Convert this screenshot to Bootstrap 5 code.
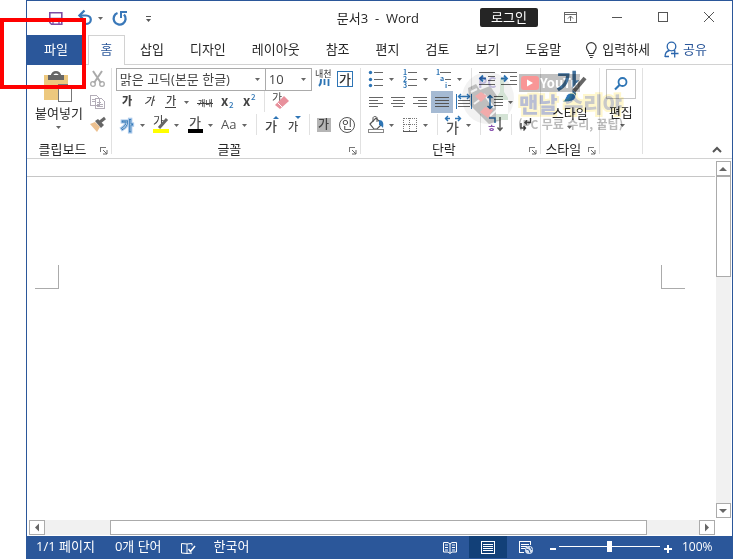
<!DOCTYPE html>
<html lang="ko">
<head>
<meta charset="utf-8">
<meta name="viewport" content="width=device-width, initial-scale=1">
<title>문서3 - Word</title>
<link href="https://cdn.jsdelivr.net/npm/bootstrap@5.3.0/dist/css/bootstrap.min.css" rel="stylesheet">
<style>
:root{--word:#2b579a;--line:#d2d2d2;--edge:#ababab;--ink:#444;--acc:#2e75b5}
body{font:13px/18px "Open Sans","Noto Sans CJK KR",sans-serif;color:#262626;background:#fff;overflow:hidden}
button{border:0;background:none;padding:0;color:inherit;font:inherit}
svg{display:block;overflow:visible}
svg text{font-family:"Noto Sans CJK KR",sans-serif}
.px{shape-rendering:crispEdges}
.app-window{margin-left:26px;border:1px solid var(--word);border-bottom:0}
.title-bar{height:34px}
.doc-title{margin-right:61px}
.quick-access{padding-left:18px}
.login-btn{width:58px;height:19px;background:#252525;color:#fff;border-radius:2px;line-height:15px;margin:0 10px 2px 0}
.win-btn{width:46px}
.win-btn,.quick-access{padding-bottom:1px}
.ribbon-tabs{height:30px;border-bottom:1px solid var(--line);flex-wrap:nowrap}
.ribbon-tabs a{color:#262626;text-decoration:none;padding:5px 13px 0;height:30px;white-space:nowrap}
.ribbon-tabs .file-tab{background:var(--word);color:#fff;width:55px;padding:5px 0 0 3px;text-align:center;margin-right:6px}
.ribbon-tabs .home-tab{border:1px solid var(--line);border-bottom:0;background:#fff;color:var(--word);padding:4px 0 0;width:37px;text-align:center;margin-right:2px}
.ribbon-tabs .tell-me{padding:5px 0 0;margin-left:9px}
.ribbon-tabs .share-link{color:var(--word);padding:5px 0 0;margin-left:13px}
.ribbon{height:94px;border-bottom:1px solid var(--line);padding:3px 0 0}
.rib-group{border-right:1px solid #e1e1e1;height:86px}
.rib-body{height:70px;padding:0 2px 0 4px;flex:none}
.tool-row{height:23px}
.rib-label{height:16px;padding-top:2px}
.tool{width:22px;height:22px;flex:none}
.drop{width:12px;height:22px;flex:none}
.split{width:1px;height:21px;margin:0 4px;background:#e1e1e1;flex:none}
.tool.active{background:#a5bad3}
.launcher{width:13px}
.rib-select{font-size:13px;height:23px;line-height:19px;padding:0 14px 0 3px;border:1px solid var(--edge);border-radius:0;color:#444;background-color:#fff;background-size:7px 4px;background-position:right 4px center;background-repeat:no-repeat;background-image:url("data:image/svg+xml,%3Csvg xmlns='http://www.w3.org/2000/svg' viewBox='0 0 7 4'%3E%3Cpath d='M1 0h5L3.500 3z' fill='%23666'/%3E%3C/svg%3E")}
.font-name{width:150px}
.font-size{width:47px;margin-left:-1px}
.big-tool{line-height:18px}
.big-tool svg{margin:0 auto}
.edit-group{padding:0 2px}
.find-box{border:1px solid #c6c6c6;width:30px;height:30px;margin:1px auto 4px}
.workspace{display:grid;grid-template-columns:1fr 17px;grid-template-rows:1fr 18px}
.ruler{height:18px;border-bottom:1px solid #c6c6c6}
.sheet{padding:88px 30px 0 8px}
.crop-mark{width:24px;height:24px;border:0 solid var(--edge);border-bottom-width:1px}
.mark-l{border-right-width:1px}
.mark-r{border-left-width:1px}
.vbar{padding:2px 0 0 1px}
.hbar{padding:2px 0 1px 2px}
.sb-btn{width:16px;height:15px;border:1px solid var(--edge);background:#fff;flex:none}
.sb-track{background:#f1f1f1}
.vbar .sb-btn,.vbar .sb-track{width:15px}
.vbar .sb-btn svg{margin-left:-1px}
.thumb-v{height:31%;border:1px solid var(--edge);background:#fff}
.thumb-h{height:15px;width:82%;margin-left:10%;border:1px solid var(--edge);background:#fff}
.status-bar{height:23px;background:var(--word);color:#fff;line-height:21px;padding-left:9px}
.view-btn{width:38px;height:22px}
.view-btn svg{margin:0 auto}
.view-btn.active{background:#124078}
.zoom-range{appearance:none;-webkit-appearance:none;width:101px;height:13px;margin:4px 3px 0;background:linear-gradient(#fff,#fff) center/100% 1px no-repeat}
.zoom-range::-webkit-slider-thumb{-webkit-appearance:none;width:5px;height:11px;background:#fff;border-radius:0}
.zoom-pct{width:60px;padding-left:10px;font-size:12px}
.red-frame{position:absolute;left:0;top:18px;width:86px;height:71px;border:4px solid #f00;pointer-events:none}
.channel-mark{position:absolute;left:460px;top:66px;pointer-events:none;mix-blend-mode:multiply}
</style>
<script src="https://cdn.jsdelivr.net/npm/bootstrap@5.3.0/dist/js/bootstrap.bundle.min.js"></script>
</head>
<body>
<svg width="0" height="0" class="position-absolute" aria-hidden="true">
<symbol id="caret" viewBox="0 0 12 22"><path d="M2 10h5L4.500 13z" fill="#666"/></symbol>
<symbol id="launch" viewBox="0 0 13 18"><path class="px" d="M2.500 12V7.500H8" fill="none" stroke="#777"/><path d="M5 10l4 4M9 10v4H5" fill="none" stroke="#666"/></symbol>
</svg>
<div class="app-window min-vh-100 d-flex flex-column">
 <header class="title-bar d-flex align-items-center">
  <div class="quick-access d-flex me-auto">
   <button aria-label="저장"><svg width="28" height="22"><path d="M4.800 5.800h12v11.400H6.500L4.800 15.500z" fill="none" stroke="#7c4fa3" stroke-width="1.600"/><path d="M5 11.500h12M8 17v-3h6v3" fill="none" stroke="#7c4fa3" stroke-width="1.300"/></svg></button>
   <button aria-label="실행 취소"><svg width="23" height="22"><path d="M6 8.500h7c6.500 0 6.500 8.500-.500 8.500" fill="none" stroke="#3a78b9" stroke-width="2.200"/><path d="M11.500 3.500L6.500 8.500l5 5" fill="none" stroke="#3a78b9" stroke-width="2.400"/></svg></button>
   <button class="drop" aria-label="실행 취소 목록"><svg width="12" height="22"><use href="#caret"/></svg></button>
   <button aria-label="다시 실행"><svg width="29" height="22"><path d="M9.500 6A6 6 0 1 0 16 7.500" fill="none" stroke="#3a78b9" stroke-width="2.300"/><path d="M13 11V5H19" fill="none" stroke="#3a78b9" stroke-width="2"/></svg></button>
   <button aria-label="빠른 실행 도구 모음"><svg width="22" height="22"><path d="M9 9.500h5" stroke="#555" class="px"/><path d="M9 12h5l-2.500 3z" fill="#555"/></svg></button>
  </div>
  <div class="doc-title">문서3 &nbsp;-&nbsp; Word</div>
  <button class="login-btn">로그인</button>
  <button class="win-btn" aria-label="리본 표시 옵션"><svg width="46" height="22"><g fill="none" stroke="#666" class="px"><path d="M16.500 5.500h12v10h-12zM16 7.500h13M22.500 9v5"/></g><path d="M20 11.500L22.500 9l2.500 2.500" fill="none" stroke="#666"/></svg></button>
  <button class="win-btn" aria-label="최소화"><svg width="46" height="22"><path class="px" d="M18 10.500h10" stroke="#555"/></svg></button>
  <button class="win-btn" aria-label="최대화"><svg width="46" height="22"><path class="px" d="M18.500 5.500h9v9h-9z" fill="none" stroke="#555"/></svg></button>
  <button class="win-btn" aria-label="닫기"><svg width="46" height="22"><path d="M18 5l10 10M28 5L18 15" stroke="#555"/></svg></button>
 </header>
 <nav class="ribbon-tabs d-flex">
  <a href="#" class="file-tab">파일</a><a href="#" class="home-tab">홈</a><a href="#">삽입</a><a href="#">디자인</a><a href="#">레이아웃</a><a href="#">참조</a><a href="#">편지</a><a href="#">검토</a><a href="#">보기</a><a href="#">도움말</a>
  <a href="#" class="tell-me d-flex"><svg class="flex-shrink-0" width="19" height="20"><path d="M6 13.500c0-2.500-2.500-3-2.500-6a4.800 4.800 0 0 1 9.600 0c0 3-2.500 3.500-2.500 6zM6 15.500h4.600M7 17.500h2.600" fill="none" stroke="#333" stroke-width="1.200"/></svg>입력하세</a>
  <a href="#" class="share-link d-flex"><svg width="20" height="20"><circle cx="8.500" cy="6.500" r="4.300" fill="none" stroke="#2b66ad" stroke-width="1.300"/><path d="M2 17c0-4 2-6 4.500-6.500M10.500 10.500l2 1M2 16.500h4M8 13.500h7.500M11.700 10v7.500" fill="none" stroke="#2b66ad" stroke-width="1.300"/></svg>공유</a>
 </nav>
 <section class="ribbon d-flex">
  <div class="rib-group d-flex flex-column">
   <div class="rib-body d-flex align-items-start">
    <button class="big-tool px-1"><svg width="46" height="36"><path d="M8 7h24v25H8z" fill="#edc87e"/><path d="M12 7h16v5H12z" fill="#666"/><path d="M16 8c0-5 8-5 8 0" fill="none" stroke="#666" stroke-width="2.500"/><path class="px" d="M22.500 16.500h9l4 4v13h-13z" fill="#fff" stroke="#777"/><path class="px" d="M31.500 16.500v4h4" fill="none" stroke="#777"/></svg>붙여넣기<svg class="mx-auto" width="12" height="10"><path d="M3 4h5L5.500 7z" fill="#666"/></svg></button>
    <div>
     <div class="tool-row"><button class="tool" aria-label="잘라내기"><svg width="22" height="22"><path d="M6 3l8 12M15 3L7 15" stroke="#aaa" stroke-width="2"/><circle cx="6" cy="16" r="2.300" fill="none" stroke="#aaa" stroke-width="1.300"/><circle cx="15" cy="16" r="2.300" fill="none" stroke="#aaa" stroke-width="1.300"/></svg></button></div>
     <div class="tool-row"><button class="tool" aria-label="복사"><svg width="22" height="22"><g class="px" fill="#fff" stroke="#b3adb8"><path d="M3.500 4.500h6l3 3v7h-9zM8.500 7.500h6l3 3v7h-9z"/><path d="M5 8.500h3M5 10.500h3M10 11.500h4M10 13.500h6M10 15.500h6"/></g></svg></button></div>
     <div class="tool-row"><button class="tool" aria-label="서식 복사"><svg width="22" height="22"><path d="M3 10l5-2 5 5-3 5z" fill="#edc190"/><path d="M8 7l3-2 6 6-3 3z" fill="#666"/><path d="M13 8l5-4" stroke="#666" stroke-width="3"/></svg></button></div>
    </div>
   </div>
   <div class="rib-label d-flex"><span class="flex-fill text-center">클립보드</span><button class="launcher" aria-label="클립보드 옵션"><svg width="13" height="18"><use href="#launch"/></svg></button></div>
  </div>
  <div class="rib-group d-flex flex-column">
   <div class="rib-body">
    <div class="tool-row d-flex">
     <select class="form-select rib-select font-name" aria-label="글꼴"><option>맑은 고딕(본문 한글)</option></select>
     <select class="form-select rib-select font-size" aria-label="글꼴 크기"><option>10</option></select>
     <button class="tool" aria-label="윗주 달기"><svg width="22" height="22"><text x="3" y="9" font-size="9" fill="#333">내천</text><path d="M9 11c0 4 0 5-2 7M12.500 11v6M16.500 11v7" fill="none" stroke="#2e75b5" stroke-width="1.800"/></svg></button>
     <button class="tool" aria-label="문자 테두리"><svg width="22" height="22"><path class="px" d="M3.500 3.500h15v15h-15z" fill="none" stroke="#2e75b5"/><text x="5" y="16" font-size="13" font-weight="500" fill="#333">가</text></svg></button>
    </div>
    <div class="tool-row d-flex">
     <button class="tool" aria-label="굵게"><svg width="22" height="22"><text x="6" y="14" font-size="11" font-weight="900" fill="#444">가</text></svg></button>
     <button class="tool" aria-label="기울임꼴"><svg width="22" height="22"><text x="6" y="14" font-size="11" font-style="italic" font-weight="500" fill="#444">가</text></svg></button>
     <button class="tool" aria-label="밑줄"><svg width="22" height="22"><text x="6" y="14" font-size="11" font-weight="500" fill="#444">가</text><path class="px" d="M5 16.500h11" stroke="#444"/></svg></button>
     <button class="drop" aria-label="밑줄 종류"><svg width="12" height="22"><use href="#caret"/></svg></button>
     <button class="tool" aria-label="취소선"><svg width="22" height="22"><text x="4" y="15" font-size="8" font-weight="500" fill="#444">개내</text><path class="px" d="M3 12.500h16" stroke="#444"/></svg></button>
     <button class="tool" aria-label="아래 첨자"><svg width="22" height="22"><text x="5" y="15" font-size="13" font-weight="700" fill="#444">x</text><text x="13" y="17" font-size="8" font-weight="500" fill="#2e75b5">2</text></svg></button>
     <button class="tool" aria-label="위 첨자"><svg width="22" height="22"><text x="5" y="15" font-size="13" font-weight="700" fill="#444">x</text><text x="13" y="9" font-size="8" font-weight="500" fill="#2e75b5">2</text></svg></button>
     <span class="split"></span>
     <button class="tool" aria-label="서식 지우기"><svg width="22" height="22"><text x="3" y="11" font-size="11" fill="#444">가</text><path d="M6 14L15 5l5 5-9 8z" fill="#e8909c"/><path d="M8.500 11.500l5 5" stroke="#fff"/></svg></button>
    </div>
    <div class="tool-row d-flex">
     <button class="tool" aria-label="텍스트 효과"><svg width="22" height="22"><text x="5" y="16" font-size="13" font-weight="500" fill="#fff" stroke="#a9c8ea" stroke-width="3">가</text><text x="5" y="16" font-size="13" font-weight="500" fill="#fff" stroke="#2e75b5" stroke-width=".8">가</text></svg></button>
     <button class="drop" aria-label="텍스트 효과 목록"><svg width="12" height="22"><use href="#caret"/></svg></button>
     <button class="tool" aria-label="형광펜"><svg width="22" height="22"><path class="px" d="M3 15h16v4H3z" fill="#ff0"/><text x="3" y="12" font-size="12" fill="#444">가</text><path d="M9 14l8-9" stroke="#666" stroke-width="3"/></svg></button>
     <button class="drop" aria-label="형광펜 색"><svg width="12" height="22"><use href="#caret"/></svg></button>
     <button class="tool" aria-label="글꼴 색"><svg width="22" height="22"><path class="px" d="M4 15h15v4H4z" fill="#000"/><text x="5" y="13" font-size="13" font-weight="500" fill="#555">가</text></svg></button>
     <button class="drop" aria-label="글꼴 색 목록"><svg width="12" height="22"><use href="#caret"/></svg></button>
     <button class="tool" aria-label="대/소문자 바꾸기"><svg width="22" height="22"><text x="3" y="15" font-size="13" fill="#555" style="font-family:'Open Sans'">Aa</text></svg></button>
     <button class="drop" aria-label="대/소문자 목록"><svg width="12" height="22"><use href="#caret"/></svg></button>
     <span class="split"></span>
     <button class="tool" aria-label="글꼴 크게"><svg width="22" height="22"><text x="4" y="17" font-size="13" fill="#444" font-weight="500">가</text><path d="M12 5h6l-3-3z" fill="#2e75b5"/></svg></button>
     <button class="tool" aria-label="글꼴 작게"><svg width="22" height="22"><text x="5" y="17" font-size="11" fill="#444" font-weight="500">가</text><path d="M12 2h6l-3 3z" fill="#2e75b5"/></svg></button>
     <span class="split"></span>
     <button class="tool" aria-label="문자 음영"><svg width="22" height="22"><path class="px" d="M3 4h14v14H3z" fill="#b5b5b5"/><text x="4" y="15" font-size="12" font-weight="500" fill="#444">가</text></svg></button>
     <button class="tool" aria-label="원 문자"><svg width="22" height="22"><circle cx="11" cy="11" r="7.500" fill="none" stroke="#555"/><text x="6" y="15" font-size="11" fill="#333">인</text></svg></button>
    </div>
   </div>
   <div class="rib-label d-flex"><span class="flex-fill text-center">글꼴</span><button class="launcher" aria-label="글꼴 옵션"><svg width="13" height="18"><use href="#launch"/></svg></button></div>
  </div>
  <div class="rib-group d-flex flex-column">
   <div class="rib-body">
    <div class="tool-row d-flex">
     <button class="tool" aria-label="글머리 기호"><svg width="22" height="22"><path class="px" d="M9 4.500h9M9 11.500h9M9 17.500h9" stroke="#666"/><g fill="#2e75b5"><circle cx="5.500" cy="4.500" r="1.700"/><circle cx="5.500" cy="11.500" r="1.700"/><circle cx="5.500" cy="17.500" r="1.700"/></g></svg></button>
     <button class="drop" aria-label="글머리 기호 목록"><svg width="12" height="22"><use href="#caret"/></svg></button>
     <button class="tool" aria-label="번호 매기기"><svg width="22" height="22"><path class="px" d="M9 4.500h9M9 11.500h9M9 17.500h9" stroke="#666"/><g fill="#2e75b5" font-size="7" font-weight="700"><text x="4" y="7">1</text><text x="4" y="14">2</text><text x="4" y="20">3</text></g></svg></button>
     <button class="drop" aria-label="번호 목록"><svg width="12" height="22"><use href="#caret"/></svg></button>
     <button class="tool" aria-label="다단계 목록"><svg width="22" height="22"><path class="px" d="M7 4.500h11M12 11.500h6M15 17.500h3" stroke="#666"/><g fill="#2e75b5" font-size="7" font-weight="700"><text x="3" y="7">1</text><text x="7" y="13">a</text><text x="12" y="20">i</text></g></svg></button>
     <button class="drop" aria-label="다단계 종류"><svg width="12" height="22"><use href="#caret"/></svg></button>
     <span class="split"></span>
     <button class="tool" aria-label="내어쓰기"><svg width="22" height="22"><path class="px" d="M3 4.500h16M12 8.500h7M12 12.500h7M3 16.500h16" stroke="#666"/><path d="M10 10.500H4M7 7.500l-3 3 3 3" fill="none" stroke="#2e75b5" stroke-width="1.800"/></svg></button>
     <button class="tool" aria-label="들여쓰기"><svg width="22" height="22"><path class="px" d="M3 4.500h16M12 8.500h7M12 12.500h7M3 16.500h16" stroke="#666"/><path d="M3 10.500h6M6 7.500l3 3-3 3" fill="none" stroke="#2e75b5" stroke-width="1.800"/></svg></button>
    </div>
    <div class="tool-row d-flex">
     <button class="tool" aria-label="왼쪽 맞춤"><svg width="22" height="22"><path class="px" d="M4 6.500h14M4 9.500h9M4 12.500h14M4 15.500h9" stroke="#666"/></svg></button>
     <button class="tool" aria-label="가운데 맞춤"><svg width="22" height="22"><path class="px" d="M4 6.500h14M6 9.500h10M4 12.500h14M6 15.500h10" stroke="#666"/></svg></button>
     <button class="tool" aria-label="오른쪽 맞춤"><svg width="22" height="22"><path class="px" d="M4 6.500h14M9 9.500h9M4 12.500h14M9 15.500h9" stroke="#666"/></svg></button>
     <button class="tool active" aria-label="양쪽 맞춤"><svg width="22" height="22"><path class="px" d="M4 6.500h14M4 9.500h14M4 12.500h14M4 15.500h14" stroke="#555"/></svg></button>
     <button class="tool" aria-label="균등 분할"><svg width="22" height="22"><path class="px" d="M5 9.500h12M5 12.500h12M5 15.500h12" stroke="#666"/><path class="px" d="M3.500 3v15M18.500 3v15" stroke="#2e75b5"/><path d="M5 5.500h12M8 3L5.500 5.500 8 8M14 3l2.500 2.500L14 8" fill="none" stroke="#2e75b5" stroke-width="1.400"/></svg></button>
     <span class="split invisible"></span>
     <button class="tool" aria-label="줄 간격"><svg width="22" height="22"><path class="px" d="M10 5.500h9M10 8.500h9M10 11.500h9M10 14.500h9" stroke="#666"/><path d="M6 4v14M3.500 7L6 4.500 8.500 7M3.500 15L6 17.500 8.500 15" fill="none" stroke="#2e75b5" stroke-width="1.500"/></svg></button>
     <button class="drop" aria-label="줄 간격 목록"><svg width="12" height="22"><use href="#caret"/></svg></button>
    </div>
    <div class="tool-row d-flex">
     <button class="tool" aria-label="음영"><svg width="22" height="22"><path d="M5 10l6-6 6 6-5 5H9z" fill="#fff" stroke="#555" stroke-width="1.200"/><path d="M8 8V4c0-2 4-2 4 0v4" fill="none" stroke="#555"/><path d="M14 6c4 0 5 3 4 8-1-1-2-3-4-3z" fill="#2e75b5"/><path class="px" d="M3.500 15.500h15v3h-15z" fill="#fff" stroke="#888"/></svg></button>
     <button class="drop" aria-label="음영 색"><svg width="12" height="22"><use href="#caret"/></svg></button>
     <button class="tool" aria-label="테두리"><svg width="22" height="22"><path class="px" d="M5 4.500h13M5 10.500h13M4.500 4v13M10.500 4v13M17.500 4v13" fill="none" stroke="#777" stroke-dasharray="1 1"/><path class="px" d="M4 17.500h14" stroke="#555"/></svg></button>
     <button class="drop" aria-label="테두리 종류"><svg width="12" height="22"><use href="#caret"/></svg></button>
     <span class="split"></span>
     <button class="tool" aria-label="문자 모양"><svg width="22" height="22"><text x="4" y="19" font-size="14" font-weight="500" fill="#555">가</text><path d="M3 4.500h5M6 2L3.500 4.500 6 7M13 4.500h5M16 2l2.500 2.500L16 7" fill="none" stroke="#2e75b5" stroke-width="1.400"/></svg></button>
     <button class="drop" aria-label="문자 모양 목록"><svg width="12" height="22"><use href="#caret"/></svg></button>
     <span class="split"></span>
     <button class="tool" aria-label="정렬"><svg width="22" height="22"><path d="M4 4h6v5" fill="none" stroke="#2e75b5" stroke-width="1.500"/><text x="2" y="18" font-size="10" font-weight="700" fill="#8b55b0">ㅎ</text><path d="M15 3v13M12.500 13.500L15 16.500l2.500-3" fill="none" stroke="#555" stroke-width="1.400"/></svg></button>
     <span class="split"></span>
     <button class="tool" aria-label="편집 기호"><svg width="22" height="22"><path d="M14.500 4v4.500H9M11 6.500L9 8.500l2 2M5 9v5h4.500M7.500 12l2 2-2 2.500" fill="none" stroke="#444" stroke-width="1.400"/></svg></button>
    </div>
   </div>
   <div class="rib-label d-flex"><span class="flex-fill text-center">단락</span><button class="launcher" aria-label="단락 옵션"><svg width="13" height="18"><use href="#launch"/></svg></button></div>
  </div>
  <div class="rib-group d-flex flex-column">
   <div class="rib-body px-1">
    <button class="big-tool px-1"><svg width="42" height="36"><text x="7" y="25" font-size="26" font-weight="700" fill="#41719c">가</text><path d="M35 11L25 23" stroke="#fff" stroke-width="6"/><path d="M36 10L25 23" stroke="#666" stroke-width="4"/><path d="M13 34c4-1 3-9 9-9 4 0 6 4 3 7-3 2-8 2-12 2z" fill="#2e75b5" stroke="#fff"/></svg>스타일<svg class="mx-auto" width="12" height="10"><path d="M3 4h5L5.500 7z" fill="#666"/></svg></button>
   </div>
   <div class="rib-label d-flex"><span class="flex-fill text-center">스타일</span><button class="launcher" aria-label="스타일 옵션"><svg width="13" height="18"><use href="#launch"/></svg></button></div>
  </div>
  <div class="rib-group edit-group">
   <button class="big-tool px-1"><span class="find-box d-flex align-items-center"><svg width="16" height="16"><circle cx="9.500" cy="6" r="4" fill="none" stroke="#2e75b5" stroke-width="1.800"/><path d="M6.500 9L2 13.500" stroke="#2e75b5" stroke-width="2.200"/></svg></span><span class="d-block">편집</span><svg width="12" height="10"><path d="M5 3h5L7.500 6z" fill="#666"/></svg></button>
  </div>
  <button class="ms-auto align-self-end me-2 pb-1" aria-label="리본 축소"><svg width="14" height="10"><path d="M3 8l4-4 4 4" fill="none" stroke="#555" stroke-width="2"/></svg></button>
 </section>
 <main class="workspace flex-fill">
  <div>
   <div class="ruler"></div>
   <div class="sheet d-flex justify-content-between"><span class="crop-mark mark-l"></span><span class="crop-mark mark-r"></span></div>
  </div>
  <div class="vbar d-flex flex-column">
   <button class="sb-btn" aria-label="위로"><svg width="14" height="13"><path d="M3 9h8L7 5z" fill="#666"/></svg></button>
   <div class="sb-track flex-fill d-flex flex-column"><div class="thumb-v"></div></div>
   <button class="sb-btn" aria-label="아래로"><svg width="14" height="13"><path d="M3 5h8L7 9z" fill="#666"/></svg></button>
  </div>
  <div class="hbar d-flex">
   <button class="sb-btn" aria-label="왼쪽으로"><svg width="14" height="13"><path d="M9 2.500v8L5 6.500z" fill="#666"/></svg></button>
   <div class="sb-track flex-fill"><div class="thumb-h"></div></div>
   <button class="sb-btn" aria-label="오른쪽으로"><svg width="14" height="13"><path d="M5 2.500v8L9 6.500z" fill="#666"/></svg></button>
  </div>
 </main>
 <footer class="status-bar d-flex">
  <span>1/1 페이지</span><span class="ms-3 ps-1">0개 단어</span>
  <button class="ms-3" aria-label="맞춤법 검사"><svg width="20" height="20"><path d="M9 15.500L3.500 15V5.500L9 6zM9 15.500l5-.5M9 6l5-.500v2" fill="none" stroke="#fff"/><path d="M10.500 11l2 2.500L17 8" fill="none" stroke="#fff" stroke-width="1.500"/></svg></button>
  <span class="ms-3">한국어</span>
  <div class="d-flex ms-auto">
   <button class="view-btn" aria-label="읽기 모드"><svg width="16" height="20"><path d="M8 16.500L6 15H1.500V5.500H6L8 7l2-1.500h4.500V15H10zM8 7v9M3 8h3M3 10.500h3M3 13h3M10 8h3M10 10.500h3M10 13h3" fill="none" stroke="#fff"/></svg></button>
   <button class="view-btn active" aria-label="인쇄 모양"><svg width="16" height="20"><path class="px" d="M1.500 4.500h13v12h-13zM3 7.500h10M3 9.500h10M3 11.500h10M3 13.500h10" fill="none" stroke="#fff"/></svg></button>
   <button class="view-btn" aria-label="웹 모양"><svg width="16" height="20"><path class="px" d="M6 15.500H1.500v-11h11V8M3 7.500h8M3 9.500h6M3 11.500h4" fill="none" stroke="#fff"/><circle cx="11" cy="13" r="4" fill="#d5e0ef"/><path d="M8 12l3 1 1 3M12 10l2 3" fill="none" stroke="#2b579a"/></svg></button>
   <button aria-label="축소"><svg width="11" height="20"><path class="px" d="M5 10h6v2H5z" fill="#fff"/></svg></button>
   <input type="range" class="zoom-range" min="0" max="100" value="50" aria-label="확대/축소">
   <button aria-label="확대"><svg width="9" height="20"><path class="px" d="M1 10h8v2H1zM4 7h2v8H4z" fill="#fff"/></svg></button>
   <span class="zoom-pct">100%</span>
  </div>
 </footer>
</div>
<svg class="channel-mark" width="172" height="72" aria-hidden="true">
 <g opacity=".38"><circle cx="28" cy="32" r="26" fill="#ddd"/><path d="M8 22l8-4 4 6 10-4 14 20-3 14-12 4-10-10-9-9z" fill="#555"/><path d="M11 26l6-3M14 38l8-6M30 50l9-8M24 28l10 14" stroke="#ddd" stroke-width="2"/><path d="M15 30l6-4 6 4-6 6zM20 46l5-5 8 3-5 8z" fill="#d22"/><path d="M40 12h4v14l4 6v22H36V32l4-6z" fill="#8fb592"/><path d="M36 34h12v14H36z" fill="#fff"/><text x="18" y="22" font-size="14" font-weight="700" fill="#5b4ba0">PC</text></g>
 <g opacity=".45"><path d="M59 8h61v18H59z" fill="#777"/><rect x="61" y="10" width="18" height="14" rx="3" fill="#f21818"/><path d="M67 13.500v7l6-3.500z" fill="#fff"/><text x="80" y="22" font-size="13" font-weight="700" fill="#fff" style="font-family:'Liberation Sans Narrow','Noto Sans CJK KR',sans-serif">YouTube</text></g>
 <g opacity=".45" font-weight="900"><text x="59" y="46" font-size="21" fill="#6470a0" stroke="#ffee90" stroke-width="4" paint-order="stroke">맨날</text><text x="104" y="46" font-size="21" fill="#888" stroke="#ffee90" stroke-width="4" paint-order="stroke">수리야</text><text x="58" y="63" font-size="12" fill="#666" font-weight="700">(PC 무료 수리, 꿀팁)</text></g>
</svg>
<div class="red-frame"></div>
</body>
</html>
